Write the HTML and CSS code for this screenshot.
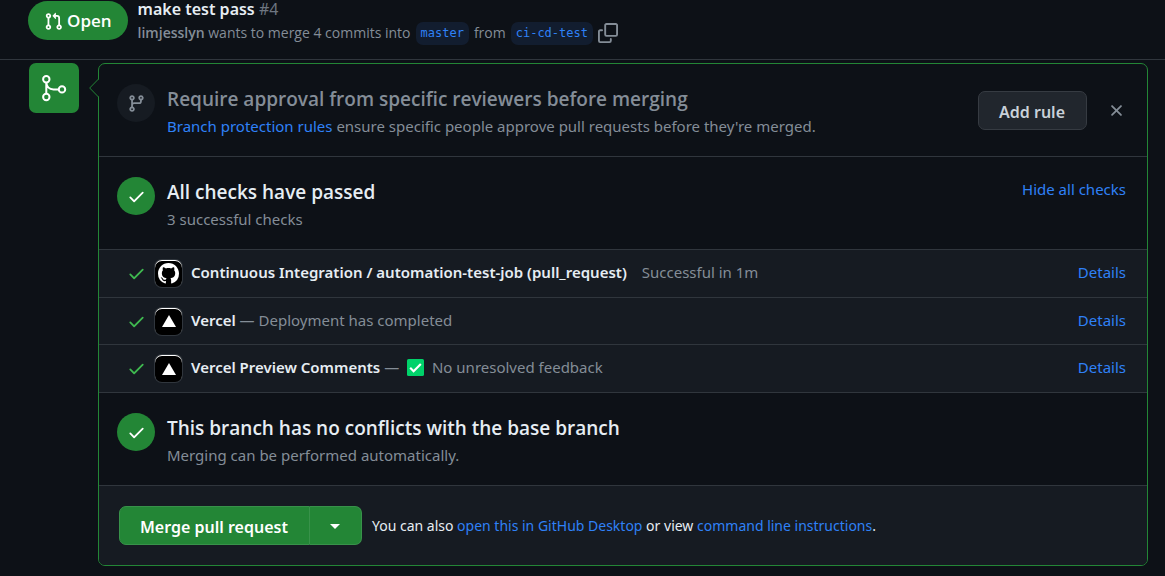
FILE: index.html
```html
<!DOCTYPE html>
<html lang="en">
<head>
<meta charset="utf-8">
<title>make test pass #4</title>
<link rel="stylesheet" href="styles.css">
</head>
<body>
<svg class="sprite" aria-hidden="true">
  <symbol id="check" viewBox="0 0 16 16"><path d="M13.78 4.22a.75.75 0 0 1 0 1.06l-7.25 7.25a.75.75 0 0 1-1.06 0L2.22 9.28a.75.75 0 0 1 1.06-1.06L6 10.94l6.72-6.72a.75.75 0 0 1 1.06 0Z"/></symbol>
</svg>

<header class="pr-header">
  <span class="state">
    <svg class="icon" viewBox="0 0 16 16" aria-hidden="true"><path d="M1.5 3.25a2.25 2.25 0 1 1 3 2.122v5.256a2.251 2.251 0 1 1-1.5 0V5.372A2.25 2.25 0 0 1 1.5 3.25Zm5.677-.177L9.573.677A.25.25 0 0 1 10 .854V2.5h1A2.5 2.5 0 0 1 13.5 5v5.628a2.251 2.251 0 1 1-1.5 0V5a1 1 0 0 0-1-1h-1v1.646a.25.25 0 0 1-.427.177L7.177 3.427a.25.25 0 0 1 0-.354ZM3.75 2.5a.75.75 0 1 0 0 1.5.75.75 0 0 0 0-1.5Zm0 9.5a.75.75 0 1 0 0 1.5.75.75 0 0 0 0-1.5Zm8.25.75a.75.75 0 1 0 1.5 0 .75.75 0 0 0-1.5 0Z"/></svg>
    Open
  </span>
  <div class="pr-info">
    <h1 class="pr-title">make test pass <span class="pr-number">#4</span></h1>
    <div class="pr-meta">
      <span><strong>limjesslyn</strong> wants to merge 4 commits into</span>
      <a class="branch" href="#">master</a>
      <span>from</span>
      <a class="branch" href="#">ci-cd-test</a>
      <button class="icon-button" type="button" aria-label="Copy branch name">
        <svg class="icon-copy" viewBox="0 0 16 16" aria-hidden="true"><path d="M0 6.75C0 5.784.784 5 1.75 5h1.5a.75.75 0 0 1 0 1.5h-1.5a.25.25 0 0 0-.25.25v7.5c0 .138.112.25.25.25h7.5a.25.25 0 0 0 .25-.25v-1.5a.75.75 0 0 1 1.5 0v1.5A1.75 1.75 0 0 1 9.25 16h-7.5A1.75 1.75 0 0 1 0 14.25Z"/><path d="M5 1.75C5 .784 5.784 0 6.75 0h7.5C15.216 0 16 .784 16 1.75v7.5A1.75 1.75 0 0 1 14.25 11h-7.5A1.75 1.75 0 0 1 5 9.25Zm1.75-.25a.25.25 0 0 0-.25.25v7.5c0 .138.112.25.25.25h7.5a.25.25 0 0 0 .25-.25v-7.5a.25.25 0 0 0-.25-.25Z"/></svg>
      </button>
    </div>
  </div>
</header>

<main class="timeline">
  <div class="merge-badge">
    <svg class="icon-merge" viewBox="0 0 30 30" aria-hidden="true"><circle cx="7.300" cy="6.300" r="3.200"/><circle cx="7.300" cy="24" r="3.200"/><circle cx="23" cy="16.400" r="3.200"/><path d="M7.300 9.500v11.300M7.300 9.500c.4 4.600 3 6.900 7.200 6.900h5.300"/></svg>
  </div>

  <div class="merge-box">
    <svg class="pointer" viewBox="0 0 10 20" aria-hidden="true"><path class="pointer-fill" d="M10 1 1 10l9 9Z"/><path class="pointer-line" d="M9.500 1 .7 10l8.800 9"/></svg>

    <section class="section">
      <span class="circle circle-muted"><svg class="icon" viewBox="0 0 16 16" aria-hidden="true"><path d="M9.500 3.250a2.250 2.250 0 1 1 3 2.122V6A2.500 2.500 0 0 1 10 8.500H6a1 1 0 0 0-1 1v1.128a2.251 2.251 0 1 1-1.500 0V5.372a2.250 2.250 0 1 1 1.500 0v1.836A2.493 2.493 0 0 1 6 7h4a1 1 0 0 0 1-1v-.628A2.250 2.250 0 0 1 9.500 3.250Zm-6 0a.75.75 0 1 0 1.500 0 .75.75 0 0 0-1.500 0Zm8.250-.75a.75.75 0 1 0 0 1.500.75.75 0 0 0 0-1.500ZM4.250 12a.75.75 0 1 0 0 1.500.75.75 0 0 0 0-1.500Z"/></svg></span>
      <div class="section-text">
        <h2 class="section-title muted">Require approval from specific reviewers before merging</h2>
        <p class="section-note"><a href="#">Branch protection rules</a> ensure specific people approve pull requests before they're merged.</p>
      </div>
      <div class="rule-actions">
        <button class="button" type="button">Add rule</button>
        <button class="icon-button" type="button" aria-label="Dismiss"><svg class="icon" viewBox="0 0 16 16" aria-hidden="true"><path d="M3.720 3.720a.75.75 0 0 1 1.060 0L8 6.940l3.220-3.220a.75.75 0 1 1 1.060 1.060L9.060 8l3.220 3.220a.75.75 0 1 1-1.060 1.060L8 9.060l-3.220 3.220a.75.75 0 0 1-1.060-1.060L6.940 8 3.720 4.780a.75.75 0 0 1 0-1.060Z"/></svg></button>
      </div>
    </section>

    <section class="section">
      <span class="circle"><svg class="icon" aria-hidden="true"><use href="#check"/></svg></span>
      <div class="section-text">
        <h2 class="section-title">All checks have passed</h2>
        <p class="section-note">3 successful checks</p>
      </div>
      <a class="section-link" href="#">Hide all checks</a>
    </section>

    <ul class="checks">
      <li class="check">
        <svg class="icon check-ok" aria-hidden="true"><use href="#check"/></svg>
        <span class="avatar"><svg class="octocat" viewBox="0 0 16 16" aria-hidden="true"><path d="M8 0c4.420 0 8 3.580 8 8a8.013 8.013 0 0 1-5.450 7.590c-.4.080-.55-.17-.55-.38 0-.27.010-1.130.010-2.200 0-.75-.25-1.230-.54-1.480 1.780-.2 3.650-.88 3.650-3.950 0-.88-.31-1.590-.82-2.150.08-.2.360-1.020-.08-2.120 0 0-.67-.22-2.200.82-.64-.18-1.320-.27-2-.27-.68 0-1.360.09-2 .27-1.530-1.030-2.200-.82-2.200-.82-.44 1.100-.16 1.920-.08 2.120-.51.560-.82 1.280-.82 2.150 0 3.060 1.860 3.750 3.640 3.950-.23.200-.44.550-.51 1.070-.46.210-1.610.55-2.330-.66-.15-.24-.6-.83-1.230-.82-.67.010-.27.380.01.530.34.190.73.900.82 1.130.16.450.68 1.310 2.690.94 0 .67.010 1.300.010 1.490 0 .21-.15.450-.55.380A7.995 7.995 0 0 1 0 8c0-4.420 3.580-8 8-8Z"/></svg></span>
        <p class="check-text"><strong>Continuous Integration / automation-test-job (pull_request)</strong><span class="check-result">Successful in 1m</span></p>
        <a class="check-link" href="#">Details</a>
      </li>
      <li class="check">
        <svg class="icon check-ok" aria-hidden="true"><use href="#check"/></svg>
        <span class="avatar"><svg class="triangle" viewBox="0 0 14 12" aria-hidden="true"><path d="M7 0 14 12H0Z"/></svg></span>
        <p class="check-text"><strong>Vercel</strong> — Deployment has completed</p>
        <a class="check-link" href="#">Details</a>
      </li>
      <li class="check">
        <svg class="icon check-ok" aria-hidden="true"><use href="#check"/></svg>
        <span class="avatar"><svg class="triangle" viewBox="0 0 14 12" aria-hidden="true"><path d="M7 0 14 12H0Z"/></svg></span>
        <p class="check-text"><strong>Vercel Preview Comments</strong> — <svg class="emoji" viewBox="0 0 16 16" role="img" aria-label="Done"><rect width="16" height="16" rx="1.500"/><path d="m3 8.300 3.200 3.200L13 4.700"/></svg> No unresolved feedback</p>
        <a class="check-link" href="#">Details</a>
      </li>
    </ul>

    <section class="section">
      <span class="circle"><svg class="icon" aria-hidden="true"><use href="#check"/></svg></span>
      <div class="section-text">
        <h2 class="section-title">This branch has no conflicts with the base branch</h2>
        <p class="section-note">Merging can be performed automatically.</p>
      </div>
    </section>

    <footer class="merge-footer">
      <div class="button-group">
        <button class="button primary" type="button">Merge pull request</button>
        <button class="button primary caret-button" type="button" aria-label="Select merge method"><span class="caret"></span></button>
      </div>
      <p class="merge-help">You can also <a href="#">open this in GitHub Desktop</a> or view <a href="#">command line instructions</a>.</p>
    </footer>
  </div>
</main>
</body>
</html>
```

FILE: styles.css
```css
* {
  box-sizing: border-box;
}

body {
  margin: 0;
  background: #0d1117;
  color: #e6edf3;
  font-family: "Noto Sans", "Open Sans", sans-serif;
  font-size: 15px;
  line-height: 24px;
}

h1, h2, p, ul {
  margin: 0;
  padding: 0;
}

strong {
  font-weight: 600;
}

a {
  color: #2f81f7;
  text-decoration: none;
}

button {
  font: inherit;
}

svg {
  display: block;
  fill: currentColor;
}

.sprite {
  display: none;
}

.icon {
  flex: none;
  width: 19px;
  height: 19px;
}

.icon-button {
  flex: none;
  padding: 0;
  border: 0;
  background: none;
  color: #848d97;
}

/* Header */

.pr-header {
  display: flex;
  align-items: flex-start;
  gap: 10px;
  height: 60px;
  padding: 1px 28px 0;
  border-bottom: 1px solid #30363d;
  font-family: "Open Sans", "Noto Sans", sans-serif;
}

.state {
  display: flex;
  flex: none;
  align-items: center;
  gap: 4px;
  height: 39px;
  padding: 1px 16px 0;
  border-radius: 20px;
  background: #238636;
  color: #fff;
  font-size: 17px;
  font-weight: 600;
}

.pr-info {
  min-width: 0;
}

.pr-title {
  margin-top: -4px;
  font-family: "Noto Sans", "Open Sans", sans-serif;
  font-size: 16px;
  font-weight: 600;
  line-height: 24px;
}

.pr-number {
  color: #6e7681;
  font-weight: 400;
}

.pr-meta {
  display: flex;
  align-items: center;
  gap: 5px;
  color: #848d97;
  font-size: 14px;
  white-space: nowrap;
}

.branch {
  padding: 0 5px;
  border-radius: 7px;
  background: #121d2f;
  font-family: "DejaVu Sans Mono", monospace;
  font-size: 12px;
  line-height: 23px;
}

.icon-copy {
  width: 20px;
  height: 20px;
}

/* Timeline */

.timeline {
  display: flex;
  align-items: flex-start;
  gap: 19px;
  padding: 3px 17px 10px 29px;
}

.merge-badge {
  display: grid;
  flex: none;
  place-items: center;
  width: 50px;
  height: 50px;
  border-radius: 7px;
  background: #238636;
  color: #fff;
}

.icon-merge {
  width: 30px;
  height: 30px;
  fill: none;
  stroke: currentColor;
  stroke-width: 2;
}

.merge-box {
  position: relative;
  flex: 1;
  min-width: 0;
  border: 1px solid #238636;
  border-radius: 7px;
}

.pointer {
  position: absolute;
  top: 14px;
  left: -10px;
  width: 10px;
  height: 20px;
}

.pointer-fill {
  fill: #0d1117;
}

.pointer-line {
  fill: none;
  stroke: #238636;
}

/* Sections */

.section {
  display: flex;
  align-items: flex-start;
  gap: 12px;
  padding: 20px 21px 18px 18px;
}

.section + .section {
  border-top: 1px solid #30363d;
}

.circle {
  display: grid;
  flex: none;
  place-items: center;
  width: 38px;
  height: 38px;
  border-radius: 50%;
  background: #238636;
  color: #fff;
}

.circle-muted {
  background: #161b22;
  color: #848d97;
}

.section-text {
  flex: 1;
  min-width: 0;
  padding-top: 2px;
}

.section-title {
  margin-bottom: 2px;
  font-family: "Open Sans", "Noto Sans", sans-serif;
  font-size: 19px;
  font-weight: 600;
  line-height: 26px;
}

.muted,
.section-note {
  color: #848d97;
}

.rule-actions {
  display: flex;
  align-items: center;
  gap: 20px;
  margin-top: 7px;
}

.button {
  height: 39px;
  padding: 2px 21px 0 20px;
  border: 1px solid #363b42;
  border-radius: 7px;
  background: #21262d;
  color: #c9d1d9;
  font-size: 16px;
  font-weight: 600;
}

/* Check list */

.checks {
  border-bottom: 1px solid #30363d;
  background: #161b22;
  list-style: none;
}

.check {
  display: flex;
  align-items: center;
  gap: 9px;
  height: 48px;
  padding: 0 21px 0 28px;
  border-top: 1px solid #30363d;
}

.check:nth-child(2) {
  height: 47px;
}

.check-ok {
  color: #3fb950;
}

.avatar {
  display: grid;
  flex: none;
  place-items: center;
  width: 27px;
  height: 27px;
  border-radius: 7px;
  background: #000;
  box-shadow: inset 0 1px 0 #fff, 0 0 0 1px #30363d;
  color: #fff;
}

.octocat {
  width: 21px;
  height: 21px;
}

.triangle {
  width: 14px;
  height: 12px;
}

.check-text,
.check-link {
  padding-bottom: 3px;
}

.check-text {
  flex: 1;
  min-width: 0;
  color: #848d97;
}

.check-text strong {
  color: #e6edf3;
}

.check-result {
  margin-left: 15px;
}

.emoji {
  display: inline-block;
  width: 17px;
  height: 17px;
  margin: 0 4px;
  fill: #00d26a;
  vertical-align: -3px;
}

.emoji path {
  fill: none;
  stroke: #fff;
  stroke-width: 2;
}

/* Footer */

.merge-footer {
  display: flex;
  align-items: center;
  gap: 10px;
  padding: 20px;
  border-top: 1px solid #30363d;
  border-radius: 0 0 6px 6px;
  background: #161b22;
}

.button-group {
  display: flex;
  flex: none;
}

.primary {
  border-color: #38924a;
  border-radius: 7px 0 0 7px;
  background: #238636;
  color: #fff;
}

.caret-button {
  border-left: 0;
  border-radius: 0 7px 7px 0;
}

.caret {
  display: block;
  border: 5px solid transparent;
  border-top-color: #fff;
  border-bottom: 0;
}

.merge-help {
  font-size: 14px;
}
```
